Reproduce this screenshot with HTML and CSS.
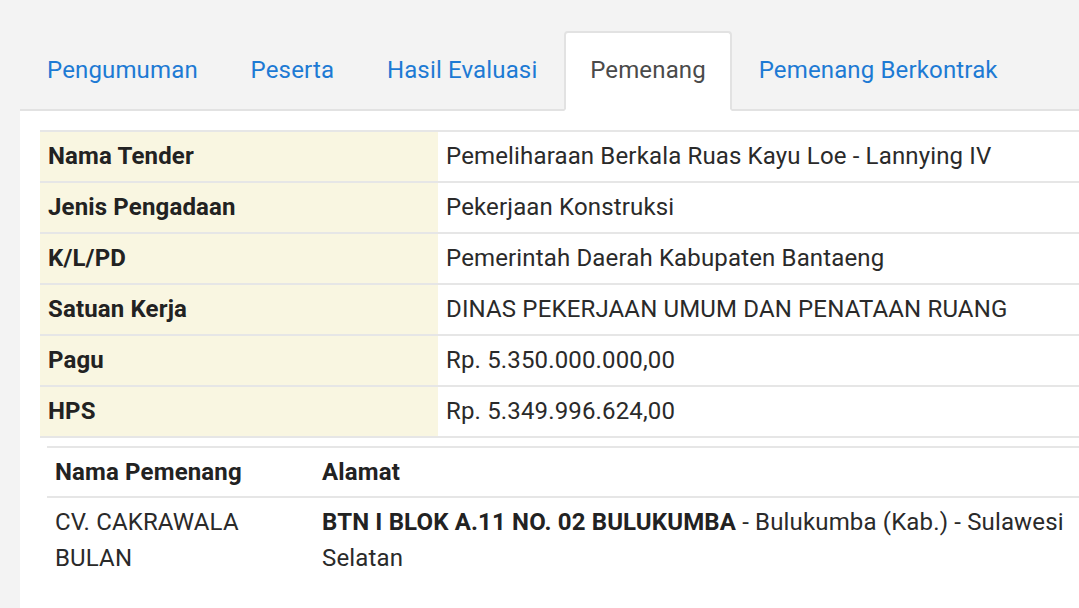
FILE: index.html
```html
<!DOCTYPE html>
<html lang="id">
<head>
    <meta charset="UTF-8">
    <meta name="viewport" content="width=device-width, initial-scale=1.0">
    <title>Pemenang Tender</title>
    <link rel="stylesheet" href="styles.css">
</head>
<body>
    <div class="page">
        <ul class="tabs">
            <li><a href="#">Pengumuman</a></li>
            <li><a href="#">Peserta</a></li>
            <li><a href="#">Hasil Evaluasi</a></li>
            <li class="active"><a href="#">Pemenang</a></li>
            <li><a href="#">Pemenang Berkontrak</a></li>
        </ul>
        <div class="tab-content">
            <table class="info">
                <tr><th>Nama Tender</th><td>Pemeliharaan Berkala Ruas Kayu Loe - Lannying IV</td></tr>
                <tr><th>Jenis Pengadaan</th><td>Pekerjaan Konstruksi</td></tr>
                <tr><th>K/L/PD</th><td>Pemerintah Daerah Kabupaten Bantaeng</td></tr>
                <tr><th>Satuan Kerja</th><td>DINAS PEKERJAAN UMUM DAN PENATAAN RUANG</td></tr>
                <tr><th>Pagu</th><td>Rp. 5.350.000.000,00</td></tr>
                <tr><th>HPS</th><td>Rp. 5.349.996.624,00</td></tr>
            </table>
            <table class="winners">
                <thead>
                    <tr><th class="col-name">Nama Pemenang</th><th>Alamat</th></tr>
                </thead>
                <tbody>
                    <tr>
                        <td>CV. CAKRAWALA BULAN</td>
                        <td><strong>BTN I BLOK A.11 NO. 02 BULUKUMBA</strong> - Bulukumba (Kab.) - Sulawesi Selatan</td>
                    </tr>
                </tbody>
            </table>
        </div>
    </div>
</body>
</html>
```

FILE: styles.css
```css
* {
    margin: 0;
    padding: 0;
    box-sizing: border-box;
}

body {
    background: #f3f3f3;
    font-family: Roboto, 'Noto Sans', sans-serif;
    color: #222;
    font-size: 24px;
    letter-spacing: 0.15px;
    overflow: hidden;
}

.page {
    padding: 31px 0 0 20px;
}

.tabs {
    list-style: none;
    display: flex;
    border-bottom: 2px solid #e2e2e2;
    border-radius: 4px 0 0 0;
}

.tabs li {
    margin-bottom: -2px;
}

.tabs li a {
    display: block;
    padding: 22px 24.4px 23px;
    color: #1d7ad4;
    text-decoration: none;
    font-size: 24px;
    line-height: 31px;
    border: 2px solid transparent;
    border-radius: 4px 4px 0 0;
}

.tabs li:first-child a {
    padding-left: 25px;
}

.tabs li.active a {
    color: #4a4a4a;
    background: white;
    border-color: #e2e2e2;
    border-bottom-color: white;
}

.tab-content {
    background: white;
    padding: 19px 0 40px 20px;
    min-height: 520px;
}

table {
    width: 100%;
    border-collapse: collapse;
}

.info {
    border-top: 2px solid #e6e6e6;
}

.info th,
.info td {
    height: 51px;
    padding: 0 8px 2px;
    text-align: left;
    border-bottom: 2px solid #e6e6e6;
    vertical-align: middle;
}

.info th {
    width: 398px;
    background: #f9f6e1;
    font-weight: bold;
}

.info td {
    font-weight: normal;
    color: #2a2a2a;
}

.winners {
    margin-top: 8px;
    margin-left: 7px;
    width: calc(100% - 7px);
    border-top: 2px solid #e6e6e6;
}

.winners th {
    text-align: left;
    height: 50px;
    padding: 0 8px;
    border-bottom: 2px solid #e6e6e6;
    font-weight: bold;
}

.winners .col-name {
    width: 267px;
}

.winners td {
    padding: 6px 8px;
    line-height: 36px;
    vertical-align: top;
    color: #2a2a2a;
}

.winners td strong {
    color: #222;
}
```
